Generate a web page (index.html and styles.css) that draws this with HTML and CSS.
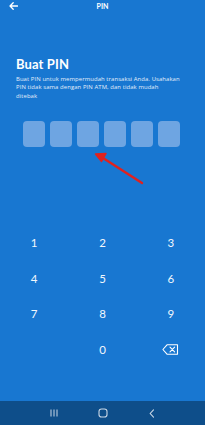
FILE: index.html
```html
<!DOCTYPE html>
<html lang="id">
<head>
<meta charset="utf-8">
<title>PIN</title>
<link rel="stylesheet" href="styles.css">
</head>
<body>
<div class="screen">
  <header class="topbar">
    <svg class="back" width="9" height="8" viewBox="0 0 9 8"><path d="M8.5 4H1.2M4.2 0.8L1 4l3.2 3.2" fill="none" stroke="#fff" stroke-width="1.3" stroke-linecap="round" stroke-linejoin="round"/></svg>
    <div class="title">PIN</div>
  </header>
  <section class="intro">
    <h1>Buat PIN</h1>
    <p>Buat PIN untuk mempermudah transaksi Anda. Usahakan<br>PIN tidak sama dengan PIN ATM, dan tidak mudah<br>ditebak</p>
  </section>
  <div class="pins">
    <span class="pin"></span><span class="pin"></span><span class="pin"></span><span class="pin"></span><span class="pin"></span><span class="pin"></span>
  </div>
  <div class="keypad">
    <span class="key">1</span><span class="key">2</span><span class="key">3</span>
    <span class="key">4</span><span class="key">5</span><span class="key">6</span>
    <span class="key">7</span><span class="key">8</span><span class="key">9</span>
    <span class="key"></span><span class="key">0</span>
    <span class="key"><svg width="17" height="11" viewBox="0 0 17 11"><path d="M5 0.8H15.5V10.2H5L0.9 5.5Z" fill="none" stroke="#fff" stroke-width="1.1" stroke-linejoin="round"/><path d="M8 3.2l4.6 4.6M12.6 3.2L8 7.8" stroke="#fff" stroke-width="1.1" stroke-linecap="round"/></svg></span>
  </div>
  <nav class="navbar">
    <svg width="8" height="8" viewBox="0 0 8 8"><path d="M1 0.5v7M4 0.5v7M7 0.5v7" stroke="#c9d7e6" stroke-width="1"/></svg>
    <svg width="10" height="10" viewBox="0 0 10 10"><rect x="1" y="1" width="8" height="8" rx="2.6" fill="none" stroke="#c9d7e6" stroke-width="1.1"/></svg>
    <svg width="6" height="9" viewBox="0 0 6 9"><path d="M4.5 0.8L1.2 4.5l3.3 3.7" fill="none" stroke="#c9d7e6" stroke-width="1.1" stroke-linecap="round"/></svg>
  </nav>
  <svg class="arrow" width="205" height="425" viewBox="0 0 205 425"><path d="M142 183L103 158" stroke="#e0221f" stroke-width="2.4" stroke-linecap="round"/><path d="M95.5 154L106 153.5L101.5 161.5Z" fill="#e0221f" stroke="#e0221f" stroke-width="1.5" stroke-linejoin="round"/></svg>
</div>
</body>
</html>
```
FILE: styles.css
```css
* { box-sizing: border-box; margin: 0; padding: 0; }
html, body { width: 205px; height: 425px; overflow: hidden; }
body { font-family: "Lato", "Open Sans", sans-serif; background: #1976d2; color: #fff; }
.screen { position: relative; width: 205px; height: 425px; display: flex; flex-direction: column; background: #1877d1; }
.topbar { height: 13px; position: relative; display: flex; align-items: center; justify-content: center; }
.back { position: absolute; left: 9px; top: 2px; }
.title { font-family: "Lato", sans-serif; font-weight: 700; font-size: 7px; line-height: 13px; }
.intro { padding: 43px 10px 0 16px; }
.intro h1 { font-family: "Lato", sans-serif; font-weight: 700; font-size: 13px; line-height: 16px; letter-spacing: 0.1px; }
.intro p { font-family: "Open Sans", sans-serif; font-size: 5.9px; letter-spacing: 0.1px; line-height: 8.3px; margin-top: 3px; color: #e3eefa; white-space: nowrap; }
.pins { display: flex; gap: 5px; margin: 21px 0 0 23px; }
.pin { width: 22px; height: 26px; border-radius: 4px; background: #6ea5e2; }
.keypad { display: grid; grid-template-columns: repeat(3, 1fr); grid-auto-rows: 35.5px; margin-top: 78px; }
.key { display: flex; align-items: center; justify-content: center; font-family: "Lato", sans-serif; font-size: 11.5px; color: #f2f7fd; }
.navbar { margin-top: auto; height: 24px; background: #0e4e8a; display: flex; align-items: center; justify-content: space-around; padding: 0 30px; }
.arrow { position: absolute; left: 0; top: 0; pointer-events: none; }
```
